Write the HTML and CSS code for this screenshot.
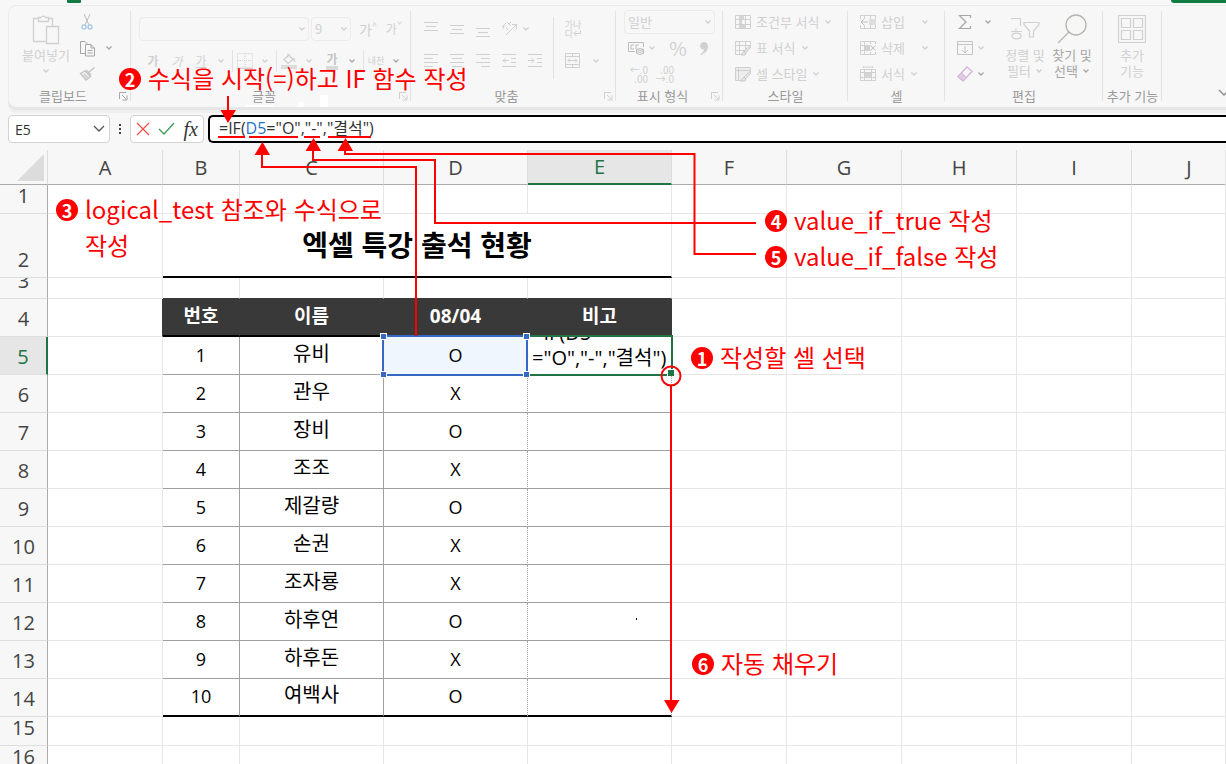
FILE: index.html
```html
<!DOCTYPE html>
<html lang="ko">
<head>
<meta charset="utf-8">
<title>엑셀 특강 출석 현황</title>
<link rel="stylesheet" href="styles.css">
</head>
<body>
<svg class="defs" aria-hidden="true">
  <symbol id="chev" viewBox="0 0 8 8"><path d="M1.5 2.5 4 5 6.500 2.500" fill="none" stroke="currentColor" stroke-width="1.3"/></symbol>
  <symbol id="launch" viewBox="0 0 9 9"><path d="M.5 7V.5H7M3 3l4.500 4.500M8 3.500V8H3.500" fill="none" stroke="currentColor"/></symbol>
  <symbol id="grid" viewBox="0 0 16 16"><path d="M.5 1.500h15v13H.5zM.5 5.500h15M.5 10.500h15M4.500 1.500v13M10.500 1.500v13" fill="none" stroke="currentColor"/></symbol>
</svg>

<header class="titlebar"><span class="tab-mark"></span><span class="share-mark"></span></header>

<section class="ribbon" aria-label="홈">
  <div class="group g-clip">
    <div class="body">
      <button class="tall"><svg width="28" height="31" viewBox="0 0 28 31"><path d="M6.500 4.500H1.500v23h12M16 4.500h4.500v7M6.500 3.500v4h10v-4h-3a2.500 2.500 0 0 0-4.500 0zM14.500 12.500h12v17h-12z" fill="none" stroke="currentColor" stroke-width="1.300"/></svg><span>붙여넣기</span><svg class="chev"><use href="#chev"/></svg></button>
      <div class="rows">
        <div class="line"><button class="ico" aria-label="잘라내기"><svg width="16" height="16" viewBox="0 0 16 16"><path d="M5 0l5 11M11 0 6 11" fill="none" stroke="#bdbdbd"/><circle cx="5" cy="13" r="2" fill="none" stroke="#a9cbe8" stroke-width="1.400"/><circle cx="11" cy="13" r="2" fill="none" stroke="#a9cbe8" stroke-width="1.400"/></svg></button></div>
        <div class="line dim"><button class="ico" aria-label="복사"><svg width="17" height="17" viewBox="0 0 17 17"><path d="M6.500 13.500h-5v-12H6l3 3M6.500 4.500H12l3.500 3.500v8h-9zM12 4.500V8h3.500M8.500 10.500h5M8.500 13h5" fill="none" stroke="currentColor"/></svg></button><svg class="chev"><use href="#chev"/></svg></div>
        <div class="line"><button class="ico" aria-label="서식 복사"><svg width="17" height="16" viewBox="0 0 17 16"><path d="M15.500 1.500 10 6M7 4l5 5M6 5 1.500 7.500 7 14l4.500-3.500z" fill="none" stroke="#c4c4c4" stroke-width="1.400"/><path d="M4 9l3 4 3-2-5-4z" fill="#d6d6d6"/></svg></button></div>
      </div>
    </div>
    <div class="cap with-launch"><span>클립보드</span><svg class="launch dark"><use href="#launch"/></svg></div>
  </div>

  <div class="group g-font">
    <div class="body two">
      <div class="line">
        <button class="combo font-name" aria-label="글꼴"><span></span><svg class="chev"><use href="#chev"/></svg></button>
        <button class="combo font-size" aria-label="글꼴 크기"><span>9</span><svg class="chev"><use href="#chev"/></svg></button>
        <button class="sz big">가<sup>^</sup></button><button class="sz">가<sup>ˇ</sup></button>
      </div>
      <div class="line fonts">
        <button class="w24"><b>가</b></button><button class="w24"><i>가</i></button><button class="w24"><u>가</u></button><svg class="chev"><use href="#chev"/></svg><i class="vs"></i>
        <button class="w24" aria-label="테두리"><svg width="16" height="16" viewBox="0 0 16 16"><path d="M.5.5h15v14H.5zM8 1v14M1 7.500h14" fill="none" stroke="currentColor" stroke-dasharray="1 1"/><path d="M0 15.500h16" stroke="currentColor"/></svg></button><svg class="chev"><use href="#chev"/></svg><i class="vs"></i>
        <button class="w24" aria-label="채우기 색"><svg width="16" height="16" viewBox="0 0 16 16"><path d="M3 6.500 8 2l4 4.500-5 4zM7 .5v4M12.500 5l1.500 4" fill="none" stroke="currentColor" stroke-width="1.300"/><path d="M0 12h16v4H0z" fill="#dcdcdc"/></svg></button><svg class="chev"><use href="#chev"/></svg>
        <button class="w24 color"><b>가</b></button><svg class="chev dim"><use href="#chev"/></svg><i class="vs"></i>
        <button class="w24 tiny">내천</button><svg class="chev dim"><use href="#chev"/></svg>
      </div>
    </div>
    <div class="cap with-launch"><span>글꼴</span><svg class="launch"><use href="#launch"/></svg></div>
  </div>

  <div class="group g-align">
    <div class="body">
      <div class="two">
        <div class="line">
          <button class="w26" aria-label="위쪽 맞춤"><svg width="14" height="16" viewBox="0 0 14 16"><path d="M0 1.500h14M2 5.500h10M0 9.500h14" stroke="currentColor"/></svg></button>
          <button class="w26" aria-label="가운데 맞춤"><svg width="14" height="16" viewBox="0 0 14 16"><path d="M0 4.500h14M2 8.500h10M0 12.500h14" stroke="currentColor"/></svg></button>
          <button class="w26" aria-label="아래쪽 맞춤"><svg width="14" height="16" viewBox="0 0 14 16"><path d="M0 7.500h14M2 11.500h10M0 15.500h14" stroke="currentColor"/></svg></button>
          <button class="w26" aria-label="방향"><svg width="17" height="16" viewBox="0 0 17 16"><path d="M5 14 15 4M11 3.500h4.500V8M1 6l4-4M2 8l1-4M6 1l4 4M8 3l2-2M5 6l2 3" fill="none" stroke="currentColor"/></svg></button>
          <svg class="chev"><use href="#chev"/></svg>
        </div>
        <div class="line">
          <button class="w26" aria-label="왼쪽"><svg width="14" height="14" viewBox="0 0 14 14"><path d="M0 .5h14M0 4.500h9M0 8.500h14M0 12.500h9" stroke="currentColor"/></svg></button>
          <button class="w26" aria-label="가운데"><svg width="14" height="14" viewBox="0 0 14 14"><path d="M0 .5h14M2 4.500h10M0 8.500h14M2 12.500h10" stroke="currentColor"/></svg></button>
          <button class="w26" aria-label="오른쪽"><svg width="14" height="14" viewBox="0 0 14 14"><path d="M0 .5h14M5 4.500h9M0 8.500h14M5 12.500h9" stroke="currentColor"/></svg></button>
          <button class="w26" aria-label="내어쓰기"><svg width="14" height="14" viewBox="0 0 14 14"><path d="M0 .5h14M9 4.500h5M9 8.500h5M0 12.500h14M7 6.500H1M3.500 4 1 6.500 3.500 9" fill="none" stroke="currentColor"/></svg></button>
          <button class="w26" aria-label="들여쓰기"><svg width="14" height="14" viewBox="0 0 14 14"><path d="M0 .5h14M9 4.500h5M9 8.500h5M0 12.500h14M0 6.500h6M3.500 4 6 6.500 3.500 9" fill="none" stroke="currentColor"/></svg></button>
        </div>
      </div>
      <i class="vs tallsep"></i>
      <div class="two">
        <div class="line"><button class="wrapbtn">가나<br>다<svg width="8" height="7" viewBox="0 0 8 7"><path d="M7.500 0v3.500H1M3.500 1 1 3.500 3.500 6" fill="none" stroke="currentColor"/></svg></button></div>
        <div class="line"><button class="w26" aria-label="병합"><svg width="16" height="16" viewBox="0 0 16 16"><path d="M.5.5h14v14H.5zM.5 3.500h14M.5 11.500h14M7.500.5v3M7.500 11.500v3M3 7.500h9M5 5.500l-2 2 2 2M10 5.500l2 2-2 2" fill="none" stroke="currentColor"/></svg></button><svg class="chev"><use href="#chev"/></svg></div>
      </div>
    </div>
    <div class="cap with-launch"><span>맞춤</span><svg class="launch"><use href="#launch"/></svg></div>
  </div>

  <div class="group g-num">
    <div class="body">
      <div class="rows">
        <div class="line"><button class="combo num-fmt"><span>일반</span><svg class="chev"><use href="#chev"/></svg></button></div>
        <div class="line"><button class="w24" aria-label="회계"><svg width="17" height="14" viewBox="0 0 17 14"><path d="M7 10.500H.5v-9h15V6M6 4H3v4h3M8 8V4h3M8.500 8.500v4q3 2 7 0v-4q-3-2-7 0q3 2 7 0M8.500 10.500q3 2 7 0" fill="none" stroke="#bdbdbd"/></svg></button><svg class="chev"><use href="#chev"/></svg><button class="pct">%</button><button class="comma" aria-label="쉼표"><svg width="8" height="13" viewBox="0 0 8 13"><path d="M4 0c2.500 0 4 2 4 4.500C8 8 6 11 1 13l-.5-1C3 10.500 4 9 4 7.500 2 8 0 6 0 4c0-2 2-4 4-4z" fill="currentColor"/></svg></button></div>
        <div class="line decimals"><button class="w24 dec"><span>←.0</span><span>.00</span></button><button class="w24 dec"><span>.00</span><span>→.0</span></button></div>
      </div>
    </div>
    <div class="cap with-launch"><span>표시 형식</span><svg class="launch"><use href="#launch"/></svg></div>
  </div>

  <div class="group g-style">
    <div class="body">
      <div class="rows">
        <button class="item"><svg width="16" height="16" viewBox="0 0 16 16"><use href="#grid" width="16" height="16"/><path d="M4 2h5v4H4zM4 6h3v4H4zM4 11h7v3H4z" fill="#d4d4d4"/></svg><span>조건부 서식</span><svg class="chev"><use href="#chev"/></svg></button>
        <button class="item"><svg width="16" height="16" viewBox="0 0 16 16"><use href="#grid" width="16" height="16"/><path d="M16 4v11H6z" fill="#f7f7f7"/><path d="M15.500 5 9 11l1.500 2L16 7zM9 11l-3 4h4l1-2z" fill="#e6e6e6" stroke="#c9c9c9"/></svg><span>표 서식</span><svg class="chev"><use href="#chev"/></svg></button>
        <button class="item"><svg width="16" height="16" viewBox="0 0 16 16"><path d="M.5 1.500h15v13H.5zM.5 4.500h15M3.500 1.500v13" fill="#ededed" stroke="currentColor"/><path d="M16 4v11H6z" fill="#f7f7f7"/><path d="M15.500 5 9 11l1.500 2L16 7zM9 11l-3 4h4l1-2z" fill="#e6e6e6" stroke="#c9c9c9"/></svg><span>셀 스타일</span><svg class="chev"><use href="#chev"/></svg></button>
      </div>
    </div>
    <div class="cap"><span>스타일</span></div>
  </div>

  <div class="group g-cells">
    <div class="body">
      <div class="rows">
        <button class="item"><svg width="16" height="16" viewBox="0 0 16 16"><use href="#grid" width="16" height="16"/><path d="M0 5h9v6H0z" fill="#f7f7f7"/><path d="M9 5h7v6H9z" fill="#dedede"/><path d="M8 8H1M4 5 1 8l3 3" fill="none" stroke="#bcbcbc"/></svg><span>삽입</span><svg class="chev far"><use href="#chev"/></svg></button>
        <button class="item"><svg width="16" height="16" viewBox="0 0 16 16"><use href="#grid" width="16" height="16"/><path d="M4 5h6v6H4z" fill="#d0d0d0"/><path d="M10 4h6v8h-6z" fill="#f7f7f7"/><path d="m10.500 5.500 5 5M15.500 5.500l-5 5" stroke="#c0c0c0"/></svg><span>삭제</span><svg class="chev far"><use href="#chev"/></svg></button>
        <button class="item"><svg width="16" height="16" viewBox="0 0 16 16"><path d="M.5 3.500h15v11H.5zM.5 6.500h15M.5 11.500h15M4.500 3.500v11M11.500 3.500v11M3.500 0v2M12.500 0v2M4 1h8" fill="none" stroke="currentColor"/><path d="M5 7h6v4H5z" fill="#d4d4d4"/></svg><span>서식</span><svg class="chev"><use href="#chev"/></svg></button>
      </div>
    </div>
    <div class="cap"><span>셀</span></div>
  </div>

  <div class="group g-edit">
    <div class="body">
      <div class="rows">
        <div class="line dim"><button class="w24" aria-label="합계"><svg width="16" height="16" viewBox="0 0 16 16"><path d="M13.500 4V1.500h-11L9 8l-6.500 6.500h11V12" fill="none" stroke="currentColor" stroke-width="1.200"/></svg></button><svg class="chev sum"><use href="#chev"/></svg></div>
        <div class="line"><button class="w24" aria-label="채우기"><svg width="16" height="16" viewBox="0 0 16 16"><path d="M.5 1.500h15v13H.5zM.5 4.500h15M8 6v7M5 10l3 3 3-3" fill="none" stroke="#c4c4c4"/></svg></button><svg class="chev"><use href="#chev"/></svg></div>
        <div class="line"><button class="w24" aria-label="지우기"><svg width="16" height="16" viewBox="0 0 16 16"><path d="m10 1 5 4.500L6 15l-5-4.500z" fill="none" stroke="#d5b3da" stroke-width="1.300"/><path d="m4.500 7 5 4.500L6 15l-5-4.500z" fill="#e2c9e5" stroke="#d5b3da"/></svg></button><svg class="chev dim"><use href="#chev"/></svg></div>
      </div>
      <button class="tall"><svg width="30" height="31" viewBox="0 0 30 31"><path d="M1 4.500h9.500V12M6 14v2.500M1 17.500h11M14 8.500h15v2L23.500 17v6h-4v-6L14 10.500z" fill="none" stroke="currentColor" stroke-width="1.200"/><ellipse cx="6.500" cy="22" rx="4.500" ry="2.800" fill="none" stroke="currentColor" stroke-width="1.300"/></svg><span>정렬 및</span><span>필터 <svg class="chev"><use href="#chev"/></svg></span></button>
      <button class="tall dim"><svg width="30" height="31" viewBox="0 0 30 31"><circle cx="19" cy="11" r="10" fill="none" stroke="#b4b4b0" stroke-width="1.300"/><path d="M12 18 1 29" stroke="#b4b4b0" stroke-width="1.300"/></svg><span>찾기 및</span><span>선택 <svg class="chev"><use href="#chev"/></svg></span></button>
    </div>
    <div class="cap"><span>편집</span></div>
  </div>

  <div class="group g-add">
    <div class="body">
      <button class="tall"><svg width="28" height="31" viewBox="0 0 28 31"><path d="M.5 1.500h27v27H.5zM3.500 4.500h9v9h-9zM15.500 4.500h9v9h-9zM3.500 16.500h9v9h-9zM15.500 16.500h9v9h-9z" fill="none" stroke="currentColor" stroke-width="1.200"/></svg><span>추가</span><span>기능</span></button>
    </div>
    <div class="cap"><span>추가 기능</span></div>
  </div>
  <svg class="collapse" viewBox="0 0 12 8"><path d="m1 1 5 5 5-5" fill="none" stroke="#8c8c8c" stroke-width="1.300"/></svg>
</section>

<section class="formula-bar">
  <button class="name-box"><span>E5</span><svg width="12" height="8" viewBox="0 0 12 8"><path d="m1 1 5 5 5-5" fill="none" stroke="#555" stroke-width="1.300"/></svg></button>
  <svg class="dots" width="4" height="12" viewBox="0 0 4 12"><path d="M1 1h2v2H1zM1 5h2v2H1zM1 9h2v2H1z" fill="#444"/></svg>
  <div class="fx-box">
    <button aria-label="취소"><svg width="14" height="14" viewBox="0 0 14 14"><path d="m1 1 12 12M13 1 1 13" stroke="#f0504b" stroke-width="1.300"/></svg></button>
    <button aria-label="입력"><svg width="17" height="14" viewBox="0 0 17 14"><path d="m1 7 5 5L16 1" fill="none" stroke="#3f9a58" stroke-width="1.300"/></svg></button>
    <button class="fx">fx</button>
  </div>
  <div class="formula" role="textbox" contenteditable="true" aria-label="수식 입력줄">=IF(<span>D5</span>="O","-","결석")</div>
</section>

<main class="sheet">
<table>
  <colgroup><col class="c-h"><col class="c-a"><col class="c-b"><col class="c-c"><col class="c-c"><col class="c-c"><col class="c-a"><col class="c-a"><col class="c-a"><col class="c-a"><col class="c-a"></colgroup>
  <thead><tr><th class="corner"><svg width="27" height="27" viewBox="0 0 27 27"><path d="M27 0v27H0z" fill="#dcdcdc"/></svg></th><th>A</th><th>B</th><th>C</th><th>D</th><th class="on">E</th><th>F</th><th>G</th><th>H</th><th>I</th><th>J</th></tr></thead>
  <tbody>
    <tr class="h29"><th><div>1</div></th><td></td><td></td><td></td><td></td><td></td><td></td><td></td><td></td><td></td><td></td></tr>
    <tr class="h64"><th><div>2</div></th><td></td><td colspan="4" class="title">엑셀 특강 출석 현황</td><td></td><td></td><td></td><td></td><td></td></tr>
    <tr class="h21"><th><div>3</div></th><td></td><td class="pre"></td><td class="pre"></td><td class="pre"></td><td class="pre"></td><td></td><td></td><td></td><td></td><td></td></tr>
    <tr class="h38 head"><th><div>4</div></th><td></td><td>번호</td><td>이름</td><td>08/04</td><td>비고</td><td></td><td></td><td></td><td></td><td></td></tr>
    <tr class="h38 data cur"><th><div>5</div></th><td></td><td>1</td><td>유비</td><td class="ref">O<i class="box"></i></td><td class="edit"><div class="entry">=IF(D5<br>="O","-","결석")</div><i class="box"></i></td><td></td><td></td><td></td><td></td><td></td></tr>
    <tr class="h38 data"><th><div>6</div></th><td></td><td>2</td><td>관우</td><td>X</td><td></td><td></td><td></td><td></td><td></td><td></td></tr>
    <tr class="h38 data"><th><div>7</div></th><td></td><td>3</td><td>장비</td><td>O</td><td></td><td></td><td></td><td></td><td></td><td></td></tr>
    <tr class="h38 data"><th><div>8</div></th><td></td><td>4</td><td>조조</td><td>X</td><td></td><td></td><td></td><td></td><td></td><td></td></tr>
    <tr class="h38 data"><th><div>9</div></th><td></td><td>5</td><td>제갈량</td><td>O</td><td></td><td></td><td></td><td></td><td></td><td></td></tr>
    <tr class="h38 data"><th><div>10</div></th><td></td><td>6</td><td>손권</td><td>X</td><td></td><td></td><td></td><td></td><td></td><td></td></tr>
    <tr class="h38 data"><th><div>11</div></th><td></td><td>7</td><td>조자룡</td><td>X</td><td></td><td></td><td></td><td></td><td></td><td></td></tr>
    <tr class="h38 data"><th><div>12</div></th><td></td><td>8</td><td>하후연</td><td>O</td><td></td><td></td><td></td><td></td><td></td><td></td></tr>
    <tr class="h38 data"><th><div>13</div></th><td></td><td>9</td><td>하후돈</td><td>X</td><td></td><td></td><td></td><td></td><td></td><td></td></tr>
    <tr class="h38 data last"><th><div>14</div></th><td></td><td>10</td><td>여백사</td><td>O</td><td></td><td></td><td></td><td></td><td></td><td></td></tr>
    <tr class="h29"><th><div>15</div></th><td></td><td></td><td></td><td></td><td></td><td></td><td></td><td></td><td></td><td></td></tr>
    <tr class="h29"><th><div>16</div></th><td></td><td></td><td></td><td></td><td></td><td></td><td></td><td></td><td></td><td></td></tr>
  </tbody>
</table>
</main>

<svg class="callouts" width="1226" height="764" viewBox="0 0 1226 764" aria-hidden="true">
  <path d="M245 105h28v2h-28zM298 102h6v5h-6zM320 95h8v12h-8z" fill="#fff"/>
  <g fill="none" stroke="#f00" stroke-width="2">
    <path d="M218 137h27M249 137h49M304 137h16M328 137h43"/>
    <path d="M228 96v16M262 154v13h154v169M313 151v9h122v63h321M345 151v3h349.500v100H756"/>
    <path d="M671 386v316"/>
    <circle cx="671" cy="376" r="9.500"/>
  </g>
  <path d="M220.500 110h15.500l-8 13zM262.500 142l7.500 13h-15.500zM313.500 138l7.500 13h-15.500zM345.500 138l7.500 13h-15.500zM664 700h15.500l-8 13z" fill="#f00"/>
  <path d="M636 618h1v2h-1z"/>
</svg>
<p class="note n2"><b>2</b><span>수식을 시작(=)하고 IF 함수 작성</span></p>
<p class="note n3"><b>3</b><span>logical_test 참조와 수식으로<br>작성</span></p>
<p class="note n4"><b>4</b><span>value_if_true 작성</span></p>
<p class="note n5"><b>5</b><span>value_if_false 작성</span></p>
<p class="note n1"><b>1</b><span>작성할 셀 선택</span></p>
<p class="note n6"><b>6</b><span>자동 채우기</span></p>
</body>
</html>
```
FILE: styles.css
```css
* { box-sizing: border-box; }
html, body { height: 100%; }
body {
  margin: 0;
  position: relative;
  display: flex;
  flex-direction: column;
  overflow: hidden;
  background: #f7f7f7;
  font-family: "Open Sans", "Noto Sans CJK KR", sans-serif;
}
.defs { position: absolute; width: 0; height: 0; }
button {
  margin: 0; padding: 0; border: 0; background: none;
  font: inherit; color: inherit;
  display: flex; align-items: center; justify-content: center;
}
svg { display: block; flex: none; }

/* title strip */
.titlebar { flex: none; height: 5px; display: flex; justify-content: space-between; align-items: flex-start; padding-left: 67px; }
.tab-mark { width: 14px; height: 3px; background: #107c41; border-radius: 0 0 1px 1px; }
.share-mark { width: 55px; height: 3px; background: #107c41; border-radius: 0 0 0 3px; }

/* ribbon */
.ribbon {
  flex: none; position: relative; display: flex; height: 102px;
  margin-left: 8px;
  border: 1px solid #ebebeb; border-right: 0; border-bottom: 0;
  border-radius: 8px 0 0 8px;
  box-shadow: 0 3px 0 #e6e6e6, 0 6px 0 #efefef;
  color: #d0d0d0;
  font: 13px/16px "Noto Sans CJK KR", sans-serif;
}
.group { position: relative; flex: none; display: flex; flex-direction: column; justify-content: space-between; padding: 3px 0; }
.group::after { content: ""; position: absolute; right: 0; top: 5px; bottom: 6px; width: 1px; background: #e3e3e3; }
.g-clip { width: 122px; }
.g-font { width: 280px; }
.g-align { width: 205px; }
.g-num { width: 107px; }
.g-style { width: 125px; }
.g-cells { width: 97px; }
.g-edit { width: 158px; }
.g-add { width: 59px; }
.body { display: flex; }
.body.two { display: grid; }
.g-clip .body { padding-left: 13px; gap: 8px; }
.g-font .body { padding-left: 8px; }
.g-align .body { padding-left: 7px; }
.g-num .body { padding-left: 8px; }
.g-style .body, .g-cells .body { padding-left: 12px; }
.g-edit .body { padding-left: 8px; }
.g-add .body { padding-left: 5px; }
.rows { display: grid; grid-template-rows: repeat(3, 26px); }
.two { display: grid; grid-template-rows: 32px 32px; padding-top: 4px; }
.line { display: flex; align-items: center; }
.chev { width: 8px; height: 8px; color: #cfcfcf; }
.dim, .dim .chev, .chev.dim { color: #a6a6a6; }
.cap { position: relative; color: #999; text-align: center; }
.with-launch { padding-right: 14px; }
.launch { position: absolute; right: 3px; top: 4px; width: 9px; height: 9px; color: #cfcfcf; }
.launch.dark { color: #a6a6a6; }
.tall { flex-direction: column; justify-content: flex-start; width: 48px; padding-top: 5px; }
.tall > svg:first-child { margin-bottom: 2px; }
.tall > span { display: flex; align-items: center; gap: 4px; white-space: nowrap; }
.tall > .chev { margin-top: 4px; }
.ico { width: 18px; margin-right: 9px; }
.w24 { width: 24px; }
.w26 { width: 26px; }
.vs { width: 1px; height: 22px; background: #e3e3e3; }
.combo { justify-content: space-between; height: 24px; padding: 0 2px 0 3px; border: 1px solid #ebebeb; border-radius: 4px; }
.font-name { width: 170px; margin-right: 2px; }
.font-size { width: 40px; margin-right: 4px; }
.num-fmt { width: 91px; }
.sz { width: 26px; font-size: 12px; }
.sz.big { font-size: 14px; }
.sz sup { font-size: 9px; line-height: 9px; align-self: flex-start; }
.fonts { font-size: 12px; padding-left: 2px; }
.fonts .chev { margin: 0 7px 0 4px; }
.color b { border-bottom: 4px solid #dadada; line-height: 14px; color: #c4c4c4; }
.tiny { font-size: 9px; }
.tallsep { height: 62px; margin: 8px 6px 0 5px; }
.wrapbtn { display: block; width: 26px; font-size: 9px; line-height: 9px; text-align: center; }
.wrapbtn svg { display: inline-block; }
.g-align .two:last-child .line { gap: 6px; }
.pct { width: 28px; font-size: 19px; margin-left: 8px; }
.comma { width: 24px; }
.decimals { gap: 2px; }
.dec { flex-direction: column; font-size: 10px; line-height: 9px; align-items: flex-end; }
.item { justify-content: flex-start; gap: 5px; white-space: nowrap; }
.far { margin-left: 11px; }
.sum { margin-left: 7px; }
.g-edit .tall { width: 56px; }
.g-edit .tall + .tall { width: 46px; margin-left: -4px; }
.g-edit .rows { width: 44px; }
.collapse { position: absolute; right: -4px; top: 83px; width: 12px; height: 8px; }

/* formula bar */
.formula-bar { flex: none; display: flex; align-items: center; padding: 8px 0 7px 8px; font-size: 14px; color: #333; }
.name-box { width: 102px; height: 28px; justify-content: space-between; padding: 0 4px 0 6px; background: #fff; border: 1px solid #d2d2d2; border-radius: 4px; }
.dots { margin: 0 8px; }
.fx-box { display: flex; align-items: center; justify-content: space-between; width: 74px; height: 28px; padding: 0 5px; margin-right: 4px; background: #fff; border: 1px solid #d2d2d2; border-radius: 4px; }
.fx { font: italic 20px/20px "Liberation Serif", serif; }
.formula { flex: 1; height: 28px; font-size: 16px; line-height: 22px; padding-left: 9px; background: #fff; border: 2px solid #000; border-right: 0; border-radius: 5px 0 0 5px; white-space: nowrap; }
.formula span { color: #1f74c8; }

/* sheet */
.sheet { flex: 1; min-height: 0; overflow: hidden; border-right: 1px solid #e6e6e6; background: #fff; }
table { table-layout: fixed; width: 1247px; border-collapse: separate; border-spacing: 0; }
.c-h { width: 48px; }
.c-a { width: 115px; }
.c-b { width: 77px; }
.c-c { width: 144px; }
th, td { padding: 0; text-align: center; vertical-align: middle; }
th { font-size: 20px; font-weight: 400; color: #444; background: #f7f7f7; }
thead th { height: 35px; line-height: 27px; border-right: 1px solid #dcdcdc; border-bottom: 1px solid #ababab; }
thead .on { background: #e6e6e6; color: #217346; border-bottom: 2px solid #217346; }
.corner svg { margin: 0 0 0 17px; }
tbody td { height: var(--h); border-right: 1px solid #e6e6e6; border-bottom: 1px solid #e6e6e6; }
tbody th { height: var(--h); border-right: 1px solid #ababab; border-bottom: 1px solid #dedede; }
tbody th div { display: flex; align-items: flex-end; justify-content: center; height: calc(var(--h) - 1px); padding-bottom: 6px; overflow: hidden; line-height: 22px; }
.h21 { --h: 21px; }
.h29 { --h: 29px; }
.h38 { --h: 38px; }
.h64 { --h: 64px; }
.title { font: 700 28px/40px "Noto Sans CJK KR", sans-serif; border-bottom: 2px solid #000; padding-bottom: 2px; }
.pre { border-bottom-color: #393939; }
.head td:nth-child(n+3):nth-child(-n+6) { background: #393939; color: #fff; font-size: 19px; font-weight: 700; line-height: 26px; padding-bottom: 2px; border-right-color: #393939; border-bottom: 2px solid #000; }
.head td:nth-child(2) { border-right-color: #393939; }
.data td { font-size: 18px; line-height: 26px; color: #000; padding-bottom: 2px; }
.data td:nth-child(n+3):nth-child(-n+6) { border-right-color: #a0a0a0; border-bottom-color: #a0a0a0; }
.data td:nth-child(4) { font-size: 20px; padding-bottom: 4px; }
.data td:nth-child(5), .data td:nth-child(6) { border-right-style: dotted; }
.last td:nth-child(n+3):nth-child(-n+6) { border-bottom: 2px solid #000; }
.cur th { background: #e6e6e6; color: #217346; border-right: 2px solid #217346; }
.ref, .edit { position: relative; }
.ref { background: #eff6fe; }
.data .edit { padding: 0; }
.entry { height: 37px; overflow: hidden; display: flex; flex-direction: column; justify-content: flex-end; text-align: left; padding: 0 0 4px 4px; font-size: 20px; line-height: 25px; white-space: nowrap; }
.box { position: absolute; top: -2px; left: -2px; bottom: -2px; right: -1px; border: 2px solid #3569c4; }
.edit .box { border-color: #217346; right: -2px; }
.ref .box { z-index: 1; }
.box::after { content: ""; position: absolute; right: -3px; bottom: -2px; width: 6px; height: 6px; background: #217346; border: 1px solid #fff; border-width: 1px 0 0 1px; }
.ref .box::after {
  inset: -4px; width: auto; height: auto; border: 0;
  background:
    linear-gradient(#3569c4, #3569c4) 1px 1px / 5px 5px,
    linear-gradient(#3569c4, #3569c4) calc(100% - 1px) 1px / 5px 5px,
    linear-gradient(#3569c4, #3569c4) 1px calc(100% - 1px) / 5px 5px,
    linear-gradient(#3569c4, #3569c4) calc(100% - 1px) calc(100% - 1px) / 5px 5px,
    linear-gradient(#fff, #fff) 0 0 / 7px 7px,
    linear-gradient(#fff, #fff) 100% 0 / 7px 7px,
    linear-gradient(#fff, #fff) 0 100% / 7px 7px,
    linear-gradient(#fff, #fff) 100% 100% / 7px 7px;
  background-repeat: no-repeat;
}

/* callouts over the window */
.callouts { position: absolute; left: 0; top: 0; z-index: 2; pointer-events: none; }
.note { position: absolute; z-index: 3; display: flex; align-items: flex-start; gap: 7px; margin: 0; color: #f00; font: 24px/36px "Noto Sans CJK KR", sans-serif; white-space: nowrap; }
.note b { width: 22px; height: 22px; margin-top: 8px; border-radius: 50%; background: #f00; color: #fff; font-size: 18px; line-height: 22px; text-align: center; }
.n1 { left: 691px; top: 339px; }
.n2 { left: 119px; top: 60px; }
.n3 { left: 56px; top: 191px; }
.n4 { left: 765px; top: 202px; }
.n5 { left: 765px; top: 238px; }
.n6 { left: 692px; top: 645px; }
```
